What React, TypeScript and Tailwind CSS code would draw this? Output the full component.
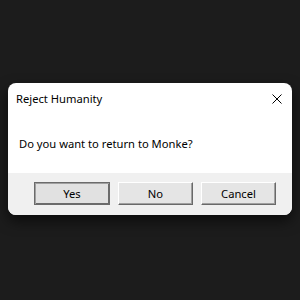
const font = { fontFamily: '"Noto Sans", "Segoe UI", sans-serif' };

function DialogButton({ label, isDefault }: { label: string; isDefault?: boolean }) {
    if (isDefault) {
        return (
            <button className="w-[76px] h-[23px] border border-[#6b6b6b] bg-[#e1e1e1] shadow-[inset_1px_1px_0_#a0a0a0,inset_-1px_-1px_0_#6b6b6b] text-[11.2px] text-black leading-none">
                {label}
            </button>
        );
    }
    return (
        <button className="w-[75px] h-[23px] border-t border-l border-white border-b border-r border-b-[#696969] border-r-[#696969] bg-[#e5e5e5] shadow-[inset_-1px_-1px_0_#a0a0a0] text-[11.2px] text-black leading-none">
            {label}
        </button>
    );
}

export default function App() {
    return (
        <div className="w-[300px] h-[300px] bg-[#1c1c1c] pt-[83px] pl-[8px]" style={font}>
            <div className="w-[284px] h-[132px] rounded-lg overflow-hidden bg-white flex flex-col shadow-[0_6px_14px_rgba(0,0,0,0.6)]">
                {/* title bar */}
                <div className="h-[32px] flex items-center justify-between pl-[8px] pr-[10px]">
                    <span className="text-[11.2px] text-black">Reject Humanity</span>
                    <svg width="10" height="10" viewBox="0 0 10 10" className="text-black">
                        <path d="M0.5 0.5 L9.5 9.5 M9.5 0.5 L0.5 9.5" stroke="currentColor" strokeWidth="1" fill="none" />
                    </svg>
                </div>

                {/* message */}
                <div className="h-[58px] flex items-center pl-[11px]">
                    <span className="text-[11.2px] text-black">Do you want to return to Monke?</span>
                </div>

                {/* buttons */}
                <div className="flex-1 bg-[#f0f0f0] flex items-start pt-[9px] pl-[26px] gap-[8px]">
                    <DialogButton label="Yes" isDefault />
                    <DialogButton label="No" />
                    <DialogButton label="Cancel" />
                </div>
            </div>
        </div>
    );
}
